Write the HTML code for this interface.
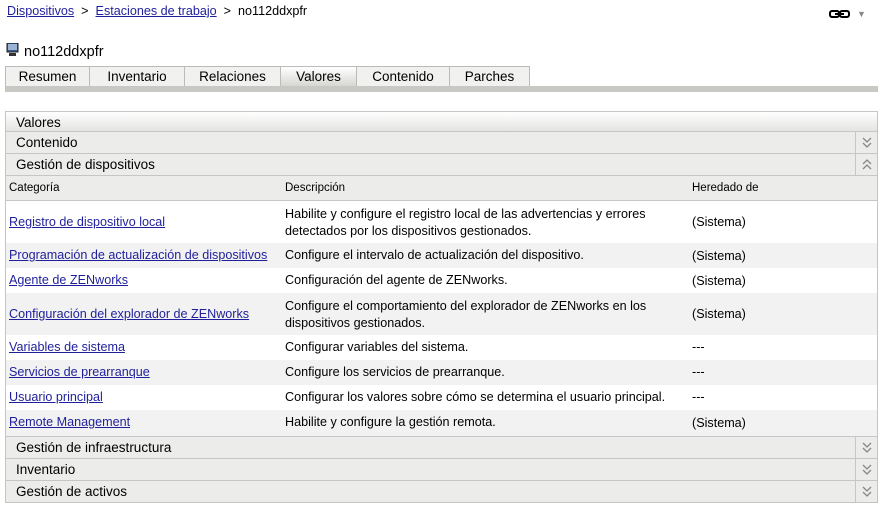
<!DOCTYPE html>
<html><head><meta charset="utf-8"><style>
*{margin:0;padding:0;box-sizing:border-box}
body{width:886px;height:508px;background:#fff;font-family:"Liberation Sans",Arial,sans-serif;font-size:12.6px;color:#000;position:relative;overflow:hidden}
a{color:#1f1f9c;text-decoration:underline}
.abs{position:absolute}
.tabs{position:absolute;left:5px;top:66px;width:873px;height:26px;border-bottom:6px solid #c8c8c4;border-left:1px solid #bbb}
.tab{position:absolute;top:0;height:20px;border:1px solid #bbb;border-left:none;border-bottom:none;background:#f1f1f0;font-size:13.5px;text-align:center;line-height:19px}
.tab.sel{background:linear-gradient(#fff,#d6d6d2)}
.panel{position:absolute;left:5px;top:111px;width:873px;height:392px;border:1px solid #c4c4c4;border-top:none}
.hdr{position:absolute;left:0;width:871px;height:22px;background:#ececea;border-top:1px solid #c6c6c6;font-size:13.5px;line-height:21px;padding-left:10px}
.hdr .ic{position:absolute;right:0;top:0;width:22px;height:21px;border-left:1px solid #c6c6c6}
.hdr .ic svg{position:absolute;left:6px;top:5px}
.row{position:absolute;left:0;width:871px}
.row div{position:absolute;white-space:nowrap}
</style></head><body>
<div class="abs" style="left:7px;top:4px"><a href="#">Dispositivos</a>&nbsp; &gt; &nbsp;<a href="#">Estaciones de trabajo</a>&nbsp; &gt; &nbsp;no112ddxpfr</div>
<svg class="abs" style="left:829px;top:10px" width="22" height="9"><rect x="1" y="1" width="9" height="6" rx="2" fill="none" stroke="#000" stroke-width="2"/><rect x="11" y="1" width="9" height="6" rx="2" fill="none" stroke="#000" stroke-width="2"/><line x1="6" y1="4" x2="15" y2="4" stroke="#000" stroke-width="2"/></svg>
<div class="abs" style="left:857px;top:9px;font-size:9px;color:#888">&#9660;</div>
<svg class="abs" style="left:6px;top:43px" width="13" height="13"><rect x="1" y="0" width="11" height="9" fill="#3a5a8a" stroke="#222"/><rect x="2" y="1" width="9" height="6" fill="#9ab4d8"/><rect x="3" y="10" width="7" height="3" fill="#333"/></svg>
<div class="abs" style="left:24px;top:44px;font-size:14.5px">no112ddxpfr</div>
<div class="tabs">
<div class="tab" style="left:0;width:84px">Resumen</div>
<div class="tab" style="left:84px;width:95px">Inventario</div>
<div class="tab" style="left:179px;width:96px">Relaciones</div>
<div class="tab sel" style="left:275px;width:76px">Valores</div>
<div class="tab" style="left:351px;width:93px">Contenido</div>
<div class="tab" style="left:444px;width:80px">Parches</div>
</div>
<div class="panel">
<div class="hdr" style="top:0;height:20px;background:linear-gradient(#fff,#e4e4e2)">Valores</div>
<div class="hdr" style="top:20px">Contenido<div class="ic"><svg width="10" height="11"><path d="M1 1L5 5L9 1M1 6L5 10L9 6" fill="none" stroke="#888" stroke-width="1.3"/></svg></div></div>
<div class="hdr" style="top:42px">Gestión de dispositivos<div class="ic"><svg width="10" height="11"><path d="M1 5L5 1L9 5M1 10L5 6L9 10" fill="none" stroke="#888" stroke-width="1.3"/></svg></div></div>
<div class="row" style="top:64px;height:26px;background:#ececea;border-top:1px solid #c6c6c6;border-bottom:1px solid #c6c6c6;font-size:11.5px"><div style="left:3px;top:6px">Categoría</div><div style="left:279px;top:6px">Descripción</div><div style="left:686px;top:6px">Heredado de</div></div>
<div class="row" style="top:90px;height:42px;background:#fff"><div style="left:3px;top:14px"><a href="#">Registro de dispositivo local</a></div><div style="left:279px;top:5px;line-height:17px">Habilite y configure el registro local de las advertencias y errores<br>detectados por los dispositivos gestionados.</div><div style="left:686px;top:14px">(Sistema)</div></div>
<div class="row" style="top:132px;height:25px;background:#f2f2f2"><div style="left:3px;top:5px"><a href="#">Programación de actualización de dispositivos</a></div><div style="left:279px;top:5px">Configure el intervalo de actualización del dispositivo.</div><div style="left:686px;top:6px">(Sistema)</div></div>
<div class="row" style="top:157px;height:25px;background:#fff"><div style="left:3px;top:5px"><a href="#">Agente de ZENworks</a></div><div style="left:279px;top:5px">Configuración del agente de ZENworks.</div><div style="left:686px;top:6px">(Sistema)</div></div>
<div class="row" style="top:182px;height:42px;background:#f2f2f2"><div style="left:3px;top:14px"><a href="#">Configuración del explorador de ZENworks</a></div><div style="left:279px;top:5px;line-height:17px">Configure el comportamiento del explorador de ZENworks en los<br>dispositivos gestionados.</div><div style="left:686px;top:14px">(Sistema)</div></div>
<div class="row" style="top:224px;height:25px;background:#fff"><div style="left:3px;top:5px"><a href="#">Variables de sistema</a></div><div style="left:279px;top:5px">Configurar variables del sistema.</div><div style="left:686px;top:5px">---</div></div>
<div class="row" style="top:249px;height:25px;background:#f2f2f2"><div style="left:3px;top:5px"><a href="#">Servicios de prearranque</a></div><div style="left:279px;top:5px">Configure los servicios de prearranque.</div><div style="left:686px;top:5px">---</div></div>
<div class="row" style="top:274px;height:25px;background:#fff"><div style="left:3px;top:5px"><a href="#">Usuario principal</a></div><div style="left:279px;top:5px">Configurar los valores sobre cómo se determina el usuario principal.</div><div style="left:686px;top:5px">---</div></div>
<div class="row" style="top:299px;height:26px;background:#f2f2f2"><div style="left:3px;top:5px"><a href="#">Remote Management</a></div><div style="left:279px;top:5px">Habilite y configure la gestión remota.</div><div style="left:686px;top:6px">(Sistema)</div></div>
<div class="hdr" style="top:325px">Gestión de infraestructura<div class="ic"><svg width="10" height="11"><path d="M1 1L5 5L9 1M1 6L5 10L9 6" fill="none" stroke="#888" stroke-width="1.3"/></svg></div></div>
<div class="hdr" style="top:347px">Inventario<div class="ic"><svg width="10" height="11"><path d="M1 1L5 5L9 1M1 6L5 10L9 6" fill="none" stroke="#888" stroke-width="1.3"/></svg></div></div>
<div class="hdr" style="top:369px">Gestión de activos<div class="ic"><svg width="10" height="11"><path d="M1 1L5 5L9 1M1 6L5 10L9 6" fill="none" stroke="#888" stroke-width="1.3"/></svg></div></div>
</div>
</body></html>
